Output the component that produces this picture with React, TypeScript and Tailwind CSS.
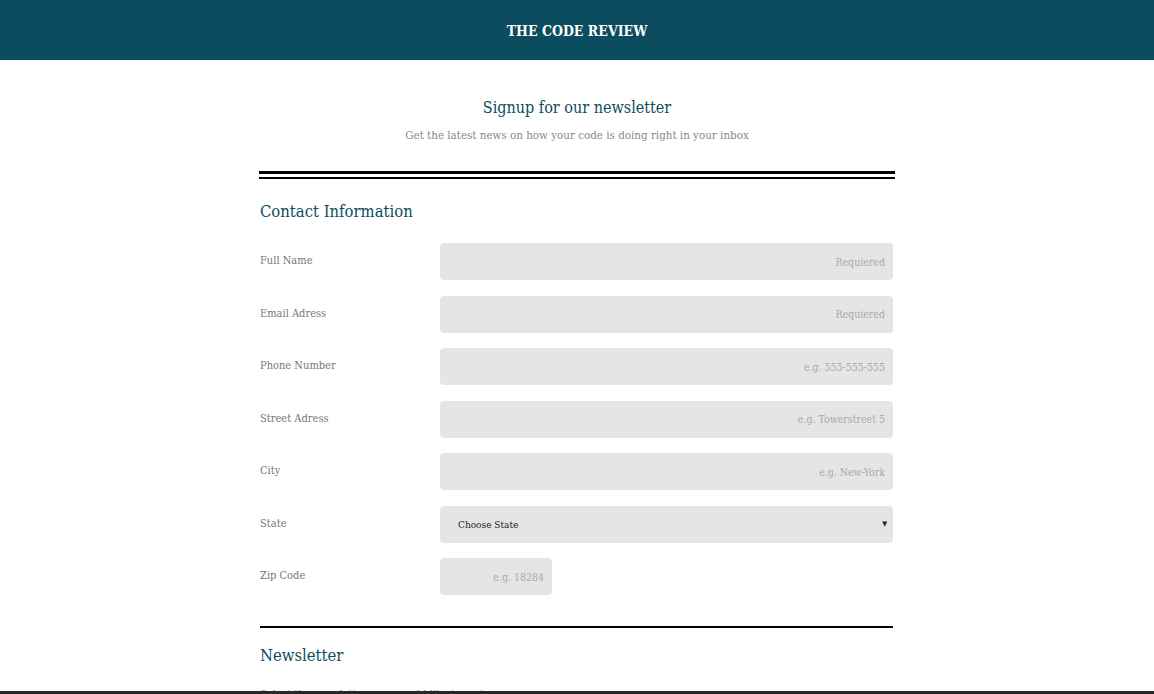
const fields = [
  { label: 'Full Name', placeholder: 'Requiered' },
  { label: 'Email Adress', placeholder: 'Requiered' },
  { label: 'Phone Number', placeholder: 'e.g. 555-555-555' },
  { label: 'Street Adress', placeholder: 'e.g. Towerstreet 5' },
  { label: 'City', placeholder: 'e.g. New-York' },
];

const serif = "font-['DejaVu_Serif_Condensed','DejaVu_Serif',serif]";

const Row = ({ label, children }: { label: string; children: React.ReactNode }) => (
  <div className="flex items-center">
    <label className="w-[180px] text-[11px] text-[#777]">{label}</label>
    {children}
  </div>
);

export default function App() {
  return (
    <div className={`min-h-screen bg-white ${serif}`}>
      {/* Header */}
      <header className="flex h-[60px] items-center justify-center bg-[#0b4d5e] pt-[3px]">
        <h1 className="text-[14px] font-bold text-white">THE CODE REVIEW</h1>
      </header>

      <main className="mx-auto w-[636px]">
        <div className="pt-[36px] text-center">
          <h2 className="text-[16px] text-[#0b4d5e]">Signup for our newsletter</h2>
          <p className="mt-[7px] text-[11.5px] text-[#888]">
            Get the latest news on how your code is doing right in your inbox
          </p>
        </div>

        {/* double rule */}
        <div className="mt-[27px]">
          <div className="h-[3px] bg-black" />
          <div className="mt-[3px] h-[2px] bg-black" />
        </div>

        <form className="pl-[1px] pr-[2px]">
          <h3 className="mt-[21px] text-[16.5px] text-[#0b4d5e]">Contact Information</h3>

          <div className="mt-[18px] flex flex-col gap-[15.5px]">
            {fields.map((f) => (
              <Row key={f.label} label={f.label}>
                <input
                  placeholder={f.placeholder}
                  className="h-[37px] flex-1 rounded-[4px] bg-[#e5e5e5] px-[8px] text-right text-[10.5px] outline-none placeholder:text-[#aaa]"
                />
              </Row>
            ))}
            <Row label="State">
              <div className="relative flex h-[37px] flex-1 items-center rounded-[4px] bg-[#e5e5e5] pl-[18px] text-[10px] text-[#222]">
                Choose State
                <span className="absolute right-[6px] text-[7px]">▼</span>
              </div>
            </Row>
            <Row label="Zip Code">
              <input
                placeholder="e.g. 18284"
                className="h-[37px] w-[112px] rounded-[4px] bg-[#e5e5e5] px-[8px] text-right text-[10.5px] outline-none placeholder:text-[#aaa]"
              />
            </Row>
          </div>

          <div className="mt-[31px] h-[2px] bg-black" />

          <h3 className="mt-[16px] text-[16.5px] text-[#0b4d5e]">Newsletter</h3>
          <p className="mt-[18px] text-[11px] text-[#888]">Select the newsletters you would like to recieve</p>
        </form>
      </main>

      <div className="fixed bottom-0 left-0 h-[3px] w-full bg-[#272727]" />
    </div>
  );
}
